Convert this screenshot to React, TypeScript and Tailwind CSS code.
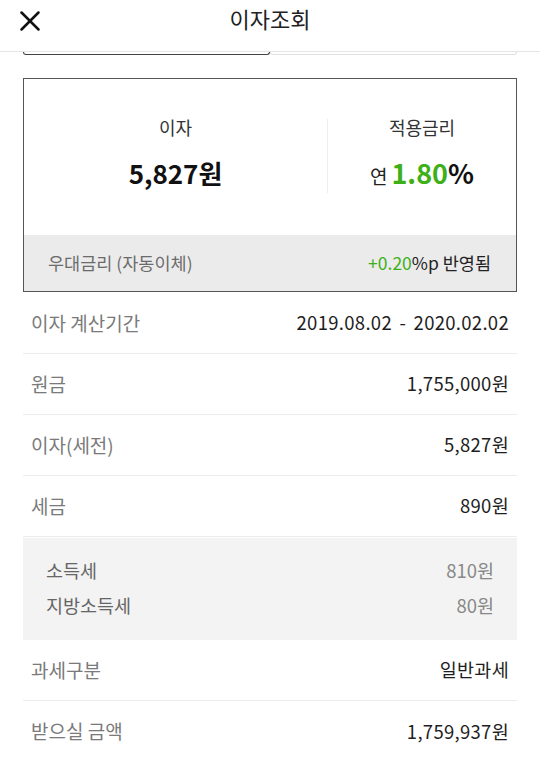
import { X } from "lucide-react";

type Row = { label: string; value: string };

const topRows: Row[] = [
  { label: "이자 계산기간", value: "2019.08.02 - 2020.02.02" },
  { label: "원금", value: "1,755,000원" },
  { label: "이자(세전)", value: "5,827원" },
  { label: "세금", value: "890원" },
];

const taxRows: Row[] = [
  { label: "소득세", value: "810원" },
  { label: "지방소득세", value: "80원" },
];

const InfoRow = ({ label, value, last }: Row & { last?: boolean }) => (
  <div
    className={`flex h-[61px] items-center justify-between px-2 ${
      last ? "" : "border-b border-[#ececec]"
    }`}
  >
    <span className="text-[19px] text-[#7a7a7a]">{label}</span>
    <span className="text-[18.5px] tracking-[0.3px] [word-spacing:3px] text-[#1e1e1e]">{value}</span>
  </div>
);

const App = () => {
  return (
    <div
      className="w-[540px] h-[760px] overflow-hidden bg-white"
      style={{ fontFamily: '"Noto Sans CJK KR", "Noto Sans", sans-serif' }}
    >
      {/* header */}
      <header className="relative flex h-[52px] justify-center border-b border-[#e6e6e6] pt-[2px]">
        <button className="absolute left-[13px] top-[4px] text-[#111]">
          <X size={34} strokeWidth={1.8} />
        </button>
        <h1 className="text-[22px] text-[#222]">이자조회</h1>
      </header>

      {/* tab strip, scrolled under header */}
      <div className="flex px-[23px]">
        <div className="h-[3px] flex-1 rounded-b-[3px] border-b border-x border-[#444]" />
        <div className="h-[3px] flex-1 rounded-b-[3px] border-b border-x border-[#e2e2e2]" />
      </div>

      <main className="px-[23px] pt-[23px]">
        {/* summary card */}
        <section className="border border-[#555]">
          <div className="flex h-[156px] items-start">
            <div className="flex flex-1 flex-col items-center gap-[19px] pt-[35px]">
              <span className="text-[18px] text-[#333]">이자</span>
              <span className="text-[26px] font-bold leading-none text-[#111]">5,827원</span>
            </div>
            <div className="mt-[40px] h-[74px] w-px bg-[#eeeeee]" />
            <div className="flex w-[188px] flex-col items-center gap-[18px] pt-[35px]">
              <span className="text-[18px] text-[#333]">적용금리</span>
              <span className="flex items-baseline leading-none">
                <span className="mr-1 text-[19px] text-[#222]">연</span>
                <span className="text-[27px] font-bold text-[#3db018]">1.80</span>
                <span className="text-[27px] font-bold text-[#111]">%</span>
              </span>
            </div>
          </div>
          <div className="flex h-[56px] items-center justify-between bg-[#ebebeb] pl-[24px] pr-[25px]">
            <span className="text-[17.5px] text-[#6b6b6b]">우대금리 (자동이체)</span>
            <span className="text-[17.5px] text-[#222]">
              <span className="text-[#3db018]">+0.20</span>%p 반영됨
            </span>
          </div>
        </section>

        {/* detail rows */}
        <div className="mt-[1px]">
          {topRows.map((r) => (
            <InfoRow key={r.label} {...r} />
          ))}
        </div>

        <div className="mt-[1px] flex flex-col gap-[8px] bg-[#f3f3f3] px-[23px] pb-[21px] pt-[19px]">
          {taxRows.map((r) => (
            <div key={r.label} className="flex h-[27px] items-center justify-between">
              <span className="text-[18.5px] text-[#666]">{r.label}</span>
              <span className="text-[18.5px] text-[#888]">{r.value}</span>
            </div>
          ))}
        </div>

        <InfoRow label="과세구분" value="일반과세" />
        <InfoRow label="받으실 금액" value="1,759,937원" last />
      </main>
    </div>
  );
};

export default App;
